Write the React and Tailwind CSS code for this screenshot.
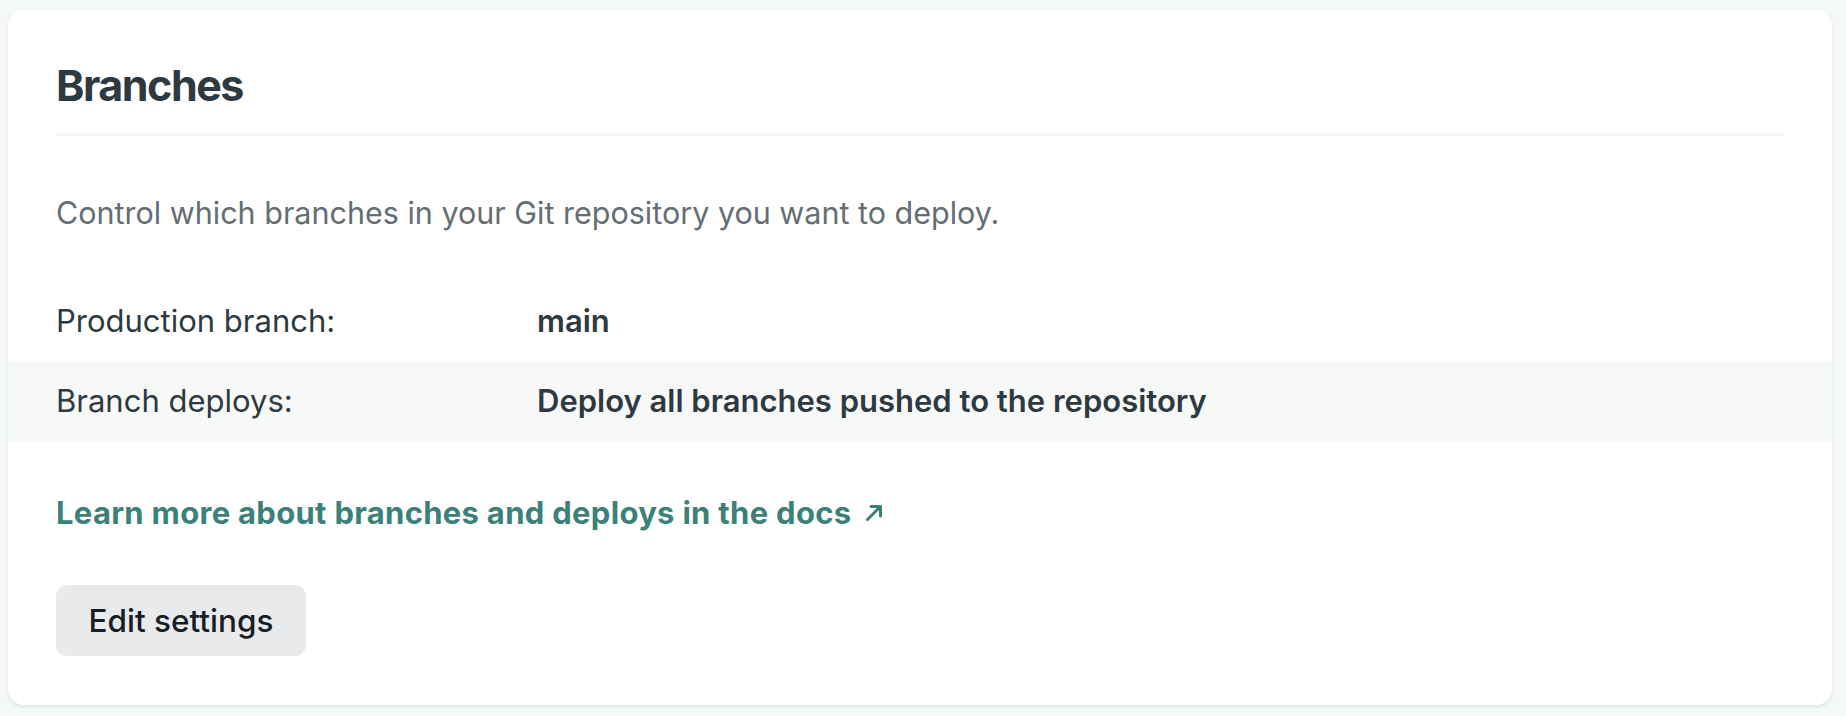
import React from "react";

function ArrowUpRight() {
  return (
    <svg width="18" height="18" viewBox="0 0 18 18" fill="none" className="shrink-0">
      <path d="M2.5 15.5 L15 3" stroke="currentColor" strokeWidth="3" strokeLinecap="round" />
      <path d="M6 2.5 H15.5 V12" stroke="currentColor" strokeWidth="3" strokeLinecap="round" strokeLinejoin="round" />
    </svg>
  );
}

export default function App() {
  const font = { fontFamily: "Inter, 'Noto Sans', 'Liberation Sans', sans-serif" };
  return (
    <div className="min-h-[716px] bg-[#f5f8f9] pt-[10px] pl-[8px] pr-[14px] pb-[10px]" style={font}>
      <div className="w-full bg-white rounded-[16px] shadow-[0_2px_4px_rgba(30,50,60,0.10)] pt-[49px] pb-[49px]">
        <div className="px-[48px]">
          <h2 className="text-[43px] leading-[53px] font-bold text-[#2e3a40] tracking-[-1.5px] pb-[21px] border-b-[3px] border-[#f4f7f7]">
            Branches
          </h2>
          <p className="mt-[54px] text-[30.5px] leading-[45px] text-[#646e73]">
            Control which branches in your Git repository you want to deploy.
          </p>
        </div>
        <div className="mt-[46px]">
          <div className="h-[80px] px-[48px] flex items-center text-[31px] text-[#2e3a40]">
            <span className="w-[481px] shrink-0">Production branch:</span>
            <span className="font-semibold">main</span>
          </div>
          <div className="h-[80px] px-[48px] flex items-center text-[31px] text-[#2e3a40] bg-[#f7f9f9]">
            <span className="w-[481px] shrink-0">Branch deploys:</span>
            <span className="font-semibold">Deploy all branches pushed to the repository</span>
          </div>
        </div>
        <div className="px-[48px]">
          <a href="#" className="mt-[49px] flex items-center gap-[14px] text-[31px] leading-[45px] font-bold tracking-[0.3px] text-[#3b8177]">
            <span>Learn more about branches and deploys in the docs</span>
            <ArrowUpRight />
          </a>
          <button className="mt-[50px] h-[71px] w-[250px] rounded-[11px] bg-[#e9eaec] text-[31.5px] font-medium text-[#181e25] flex items-center justify-center">
            Edit settings
          </button>
        </div>
      </div>
    </div>
  );
}
